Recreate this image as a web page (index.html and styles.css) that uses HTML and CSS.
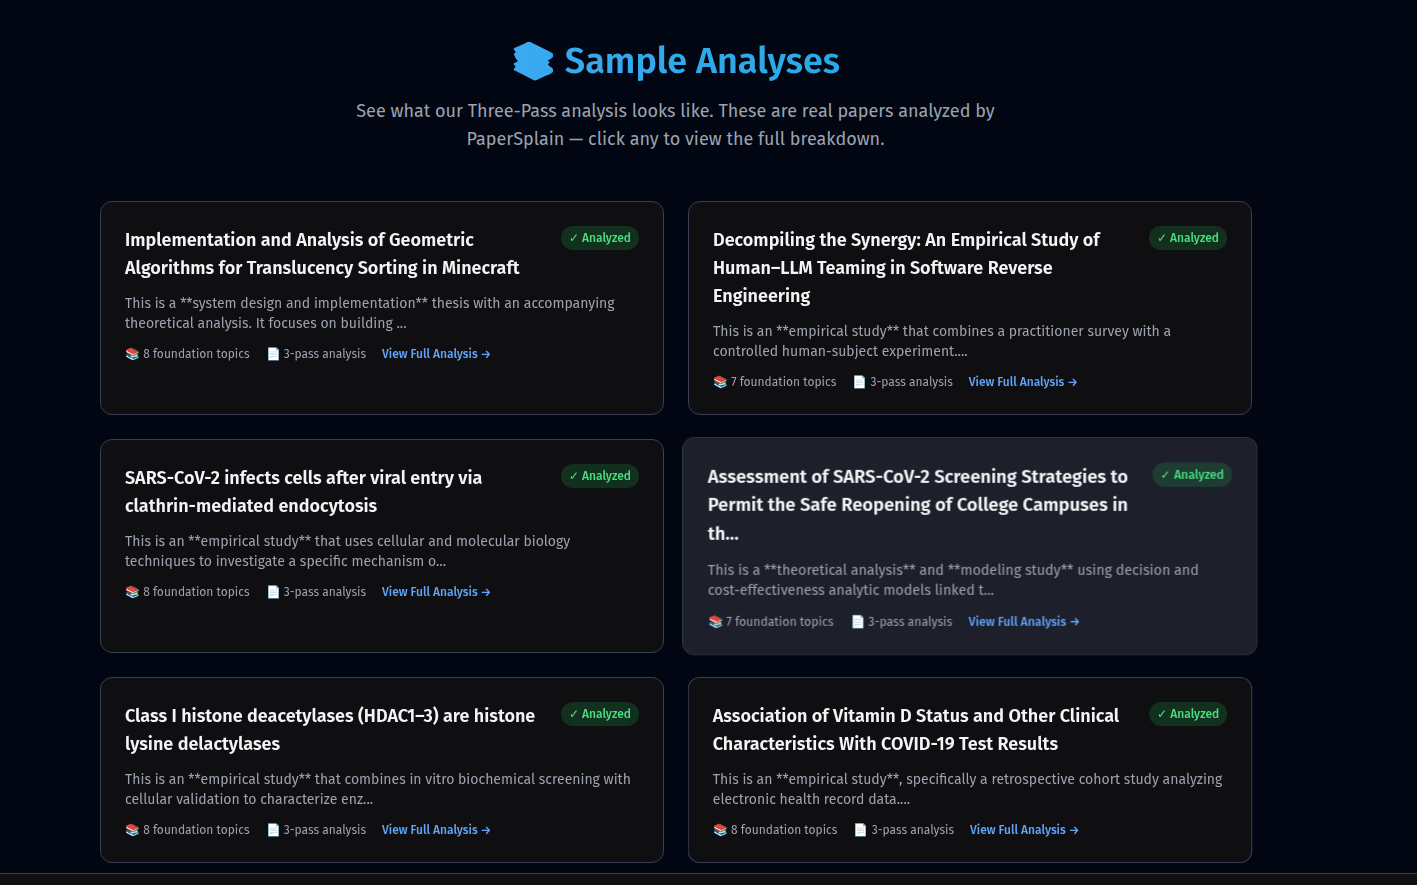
FILE: index.html
```html
<!DOCTYPE html>
<html lang="en">
<head>
<meta charset="utf-8">
<title>Sample Analyses</title>
<link rel="stylesheet" href="styles.css">
</head>
<body>
<main class="page">
  <header class="hero">
    <h1 class="hero-title">📚 Sample Analyses</h1>
    <p class="hero-sub">See what our Three-Pass analysis looks like. These are real papers analyzed by PaperSplain — click any to view the full breakdown.</p>
  </header>
  <section class="grid">
    <article class="card">
      <div class="card-head"><h2 class="card-title">Implementation and Analysis of Geometric Algorithms for Translucency Sorting in Minecraft</h2><span class="badge">✓ Analyzed</span></div>
      <p class="card-desc">This is a **system design and implementation** thesis with an accompanying theoretical analysis. It focuses on building ...</p>
      <div class="meta"><span>📚 8 foundation topics</span><span>📄 3-pass analysis</span><a class="link">View Full Analysis →</a></div>
    </article>
    <article class="card">
      <div class="card-head"><h2 class="card-title">Decompiling the Synergy: An Empirical Study of Human–LLM Teaming in Software Reverse Engineering</h2><span class="badge">✓ Analyzed</span></div>
      <p class="card-desc">This is an **empirical study** that combines a practitioner survey with a controlled human-subject experiment....</p>
      <div class="meta"><span>📚 7 foundation topics</span><span>📄 3-pass analysis</span><a class="link">View Full Analysis →</a></div>
    </article>
    <article class="card">
      <div class="card-head"><h2 class="card-title">SARS-CoV-2 infects cells after viral entry via clathrin-mediated endocytosis</h2><span class="badge">✓ Analyzed</span></div>
      <p class="card-desc">This is an **empirical study** that uses cellular and molecular biology techniques to investigate a specific mechanism o...</p>
      <div class="meta"><span>📚 8 foundation topics</span><span>📄 3-pass analysis</span><a class="link">View Full Analysis →</a></div>
    </article>
    <article class="card card-hover">
      <div class="card-head"><h2 class="card-title">Assessment of SARS-CoV-2 Screening Strategies to Permit the Safe Reopening of College Campuses in th...</h2><span class="badge">✓ Analyzed</span></div>
      <p class="card-desc">This is a **theoretical analysis** and **modeling study** using decision and cost-effectiveness analytic models linked t...</p>
      <div class="meta"><span>📚 7 foundation topics</span><span>📄 3-pass analysis</span><a class="link">View Full Analysis →</a></div>
    </article>
    <article class="card">
      <div class="card-head"><h2 class="card-title">Class I histone deacetylases (HDAC1–3) are histone lysine delactylases</h2><span class="badge">✓ Analyzed</span></div>
      <p class="card-desc">This is an **empirical study** that combines in vitro biochemical screening with cellular validation to characterize enz...</p>
      <div class="meta"><span>📚 8 foundation topics</span><span>📄 3-pass analysis</span><a class="link">View Full Analysis →</a></div>
    </article>
    <article class="card card-settling">
      <div class="card-head"><h2 class="card-title">Association of Vitamin D Status and Other Clinical Characteristics With COVID-19 Test Results</h2><span class="badge">✓ Analyzed</span></div>
      <p class="card-desc">This is an **empirical study**, specifically a retrospective cohort study analyzing electronic health record data....</p>
      <div class="meta"><span>📚 8 foundation topics</span><span>📄 3-pass analysis</span><a class="link">View Full Analysis →</a></div>
    </article>
  </section>
</main>
<footer class="bar"></footer>
</body>
</html>
```
FILE: styles.css
```css
* { box-sizing: border-box; }
html, body { margin: 0; height: 885px; overflow: hidden; }
body {
  background: #020612;
  font-family: "Fira Sans", "Noto Sans", "Open Sans", sans-serif;
  display: flex;
  flex-direction: column;
}
.page { width: 1352px; height: 873px; padding-top: 41px; flex: none; }
.hero { display: flex; flex-direction: column; align-items: center; margin-right: 1px; }
.hero-title {
  margin: 0;
  font-size: 36px;
  line-height: 40px;
  font-weight: 600;
  background: linear-gradient(90deg, #3ba9f0, #28a9e6);
  -webkit-background-clip: text;
  background-clip: text;
  color: transparent;
}
.hero-sub {
  margin: 16px 0 0;
  width: 672px;
  font-size: 18px;
  line-height: 28px;
  text-align: center;
  color: #9ca3af;
}
.grid {
  width: 1152px;
  margin: 48px auto 0;
  display: grid;
  grid-template-columns: 1fr 1fr;
  gap: 24px;
}
.card {
  padding: 24px;
  background: #0f0f11;
  border: 1px solid #374151;
  border-radius: 12px;
  will-change: transform;
}
.card-hover {
  background: #1d1f2a;
  border-color: #2d3441;
  animation: lift 0.05s linear 0.05s forwards;
}
.card-settling {
  transform: scale(1.001);
}
@keyframes lift {
  to { transform: scale(1.02); }
}
.card-head { display: flex; justify-content: space-between; align-items: flex-start; gap: 16px; }
.card-title {
  margin: 0;
  font-size: 18px;
  line-height: 28px;
  font-weight: 600;
  color: #f3f4f6;
}
.badge {
  flex: none;
  padding: 4px 8px;
  border-radius: 999px;
  background: rgba(34, 197, 94, 0.18);
  color: #4ade80;
  font-size: 12px;
  line-height: 16px;
  font-weight: 500;
}
.card-desc {
  margin: 12px 0 0;
  font-size: 14px;
  line-height: 20px;
  color: #9ca3af;
}
.meta {
  margin-top: 12px;
  display: flex;
  gap: 16px;
  font-size: 12px;
  line-height: 16px;
  color: #9ca3af;
}
.link { color: #60a5fa; font-weight: 500; }
.bar {
  height: 12px;
  flex: none;
  background: #111111;
  border-top: 1px solid #374151;
}
```
